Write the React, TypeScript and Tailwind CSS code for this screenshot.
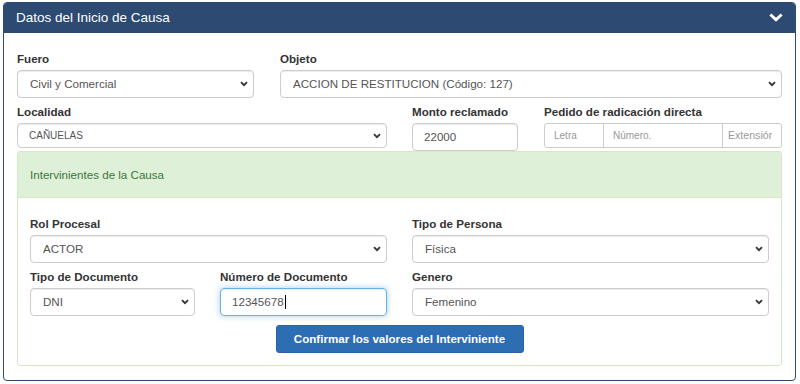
import React from "react";

const font = { fontFamily: '"Liberation Sans", Arial, Helvetica, sans-serif' };

function Chevron() {
  return (
    <svg
      className="absolute right-[5px] top-1/2 -translate-y-1/2"
      width="8"
      height="6"
      viewBox="0 0 8 6"
    >
      <polyline points="1,1.2 4,4.2 7,1.2" fill="none" stroke="#333" strokeWidth="1.8" />
    </svg>
  );
}

function Label({ children }: { children: React.ReactNode }) {
  return (
    <div className="h-[17px] leading-[17px] mb-[3px] text-[11.6px] font-bold text-[#333] whitespace-nowrap">
      {children}
    </div>
  );
}

function Select({
  value,
  h = "h-[28px]",
  small = false,
}: {
  value: string;
  h?: string;
  small?: boolean;
}) {
  return (
    <div
      className={`relative ${h} flex items-center border border-[#ccc] rounded-[4px] bg-white shadow-[inset_0_1px_1px_rgba(0,0,0,0.075)] ${
        small ? "pl-[11px] text-[10px]" : "pl-[12px] text-[11.6px]"
      } text-[#555]`}
    >
      <span className="whitespace-nowrap">{value}</span>
      <Chevron />
    </div>
  );
}

export default function App() {
  return (
    <div className="w-[800px] h-[384px] bg-white pt-[2px] pl-[3px]" style={font}>
      <div className="w-[793px] h-[379px] border border-[#2c4a72] rounded-[4px] overflow-hidden bg-white flex flex-col">
        {/* header */}
        <div className="h-[30px] shrink-0 bg-[#2c4a72] flex items-center justify-between pl-[12px] pr-[12px]">
          <span className="text-white text-[13.5px]">Datos del Inicio de Causa</span>
          <svg width="14" height="10" viewBox="0 0 14 10">
            <polyline
              points="2.5,2.5 7,6.8 11.5,2.5"
              fill="none"
              stroke="#fff"
              strokeWidth="3"
              strokeLinecap="square"
            />
          </svg>
        </div>

        {/* body */}
        <div className="px-[13px] pt-[17px] flex flex-col">
          {/* row 1 */}
          <div className="flex gap-[26px]">
            <div className="w-[237px] shrink-0">
              <Label>Fuero</Label>
              <Select value="Civil y Comercial" />
            </div>
            <div className="flex-1 min-w-0">
              <Label>Objeto</Label>
              <Select value="ACCION DE RESTITUCION (Código: 127)" />
            </div>
          </div>

          {/* row 2 */}
          <div className="flex mt-[5px]">
            <div className="w-[370px] shrink-0">
              <Label>Localidad</Label>
              <Select value="CAÑUELAS" h="h-[25px]" small />
            </div>
            <div className="w-[106px] shrink-0 ml-[25px]">
              <Label>Monto reclamado</Label>
              <div className="h-[28px] flex items-center border border-[#ccc] rounded-[4px] pl-[11px] text-[11.6px] text-[#555] shadow-[inset_0_1px_1px_rgba(0,0,0,0.075)]">
                22000
              </div>
            </div>
            <div className="w-[238px] shrink-0 ml-[26px]">
              <Label>Pedido de radicación directa</Label>
              <div className="h-[25px] flex border border-[#ccc] rounded-[3px] text-[10px] text-[#999] overflow-hidden">
                <div className="w-[59px] shrink-0 flex items-center pl-[9px] border-r border-[#ccc]">Letra</div>
                <div className="w-[119px] shrink-0 flex items-center pl-[9px] border-r border-[#ccc]">Número.</div>
                <div className="w-[58px] shrink-0 pl-[5px] pr-[9px] flex">
                  <div className="w-[44px] flex items-center whitespace-nowrap overflow-hidden text-[10.6px]">
                    Extensión
                  </div>
                </div>
              </div>
            </div>
          </div>

          {/* green panel */}
          <div className="border border-[#d6e9c6] rounded-[3px] h-[215px] flex flex-col">
            <div className="h-[46px] bg-[#dff0d8] flex items-center pl-[12px] text-[11.6px] text-[#3c763d] border-b border-[#d6e9c6]">
              Intervinientes de la Causa
            </div>
            <div className="px-[12px] pt-[17px] flex flex-col">
              <div className="flex gap-[25px]">
                <div className="flex-1">
                  <Label>Rol Procesal</Label>
                  <Select value="ACTOR" />
                </div>
                <div className="flex-1">
                  <Label>Tipo de Persona</Label>
                  <Select value="Física" />
                </div>
              </div>
              <div className="flex gap-[25px] mt-[5px]">
                <div className="w-[165px] shrink-0">
                  <Label>Tipo de Documento</Label>
                  <Select value="DNI" />
                </div>
                <div className="w-[167px] shrink-0">
                  <Label>Número de Documento</Label>
                  <div className="h-[28px] flex items-center border border-[#66afe9] rounded-[4px] pl-[11px] text-[11.6px] text-[#555] shadow-[inset_0_1px_1px_rgba(0,0,0,0.075),0_0_6px_rgba(102,175,233,0.6)]">
                    12345678
                    <span className="inline-block w-px h-[14px] bg-black ml-[1px]" />
                  </div>
                </div>
                <div className="flex-1 min-w-0">
                  <Label>Genero</Label>
                  <Select value="Femenino" />
                </div>
              </div>
              <div className="flex justify-center mt-[9px]">
                <div className="w-[248px] h-[28px] flex items-center justify-center bg-[#2d6db4] border border-[#2a63a3] rounded-[3px] text-white text-[11.6px] font-bold">
                  Confirmar los valores del Interviniente
                </div>
              </div>
            </div>
          </div>
        </div>
      </div>
    </div>
  );
}
